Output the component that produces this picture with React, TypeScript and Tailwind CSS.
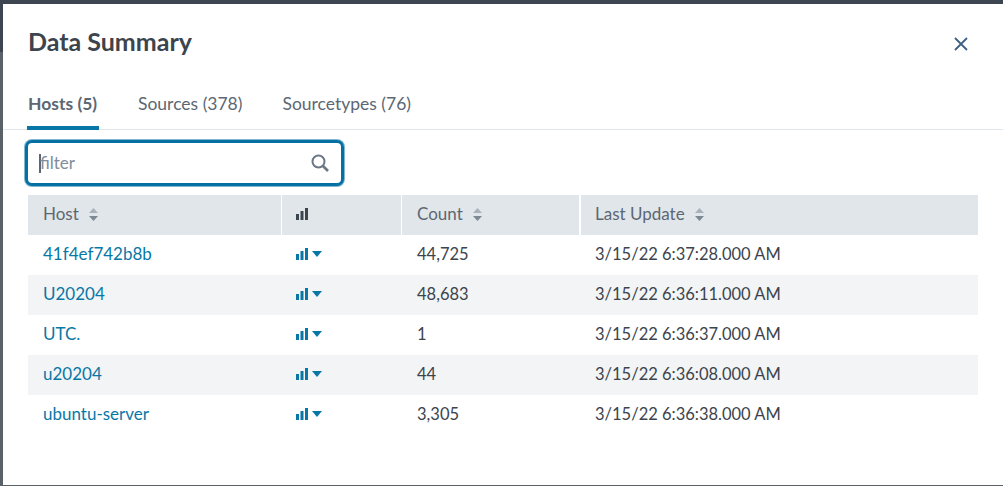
import React from "react";

const rows = [
  { host: "41f4ef742b8b", count: "44,725", last: "3/15/22 6:37:28.000 AM" },
  { host: "U20204", count: "48,683", last: "3/15/22 6:36:11.000 AM" },
  { host: "UTC.", count: "1", last: "3/15/22 6:36:37.000 AM" },
  { host: "u20204", count: "44", last: "3/15/22 6:36:08.000 AM" },
  { host: "ubuntu-server", count: "3,305", last: "3/15/22 6:36:38.000 AM" },
];

const Bars = ({ className }: { className: string }) => (
  <svg width="12" height="12" viewBox="0 0 12 12" className={className} fill="currentColor">
    <rect x="0" y="6" width="3" height="6" />
    <rect x="4.5" y="3" width="3" height="9" />
    <rect x="9" y="0" width="3" height="12" />
  </svg>
);

const Sort = () => (
  <svg width="9" height="13" viewBox="0 0 9 13">
    <path d="M4.5 0 9 5H0z" fill="#a9b2bb" />
    <path d="M4.5 13 0 8h9z" fill="#7d8894" />
  </svg>
);

export default function App() {
  return (
    <div className="w-[1003px] h-[486px] overflow-hidden bg-[linear-gradient(#3c4550_52px,#5a6169_52px)] pl-[3px] pt-1 pb-px font-['Lato',sans-serif]">
      <div className="h-full bg-white text-[#3c444d]">
        {/* Header */}
        <div className="flex items-center justify-between h-[76px] pl-[25px] pr-[35px]">
          <h1 className="mb-0.5 text-[25px] font-bold leading-none">Data Summary</h1>
          <svg width="14" height="14" viewBox="0 0 14 14" className="mt-[3px] text-[#3f6186]" stroke="currentColor" strokeWidth="1.8">
            <path d="M1 1l12 12M13 1 1 13" />
          </svg>
        </div>

        {/* Tabs */}
        <div className="flex h-[50px] pl-6 gap-[39px] border-b border-[#e1e6eb] text-[17.5px] text-[#5c6773]">
          <div className="h-[50px] w-[72px] border-b-4 border-[#0877a6] px-px pt-[11px] font-bold">Hosts (5)</div>
          <div className="mr-px pt-[11px]">Sources (378)</div>
          <div className="pt-[11px]">Sourcetypes (76)</div>
        </div>

        {/* Filter */}
        <div className="mt-[13px] ml-[25px] flex items-center justify-between w-[313px] h-10 rounded bg-white shadow-[0_0_0_3px_#0670a3,0_0_0_4px_#0670a380] pl-[11px] pr-3">
          <div className="flex items-center text-[17px] text-[#818d99]">
            <span className="w-0.5 h-[19px] bg-[#5c6773]" />
            <span className="-ml-px">filter</span>
          </div>
          <svg width="18" height="18" viewBox="0 0 18 18" className="text-[#6b7785]" fill="none" stroke="currentColor" strokeWidth="2">
            <circle cx="7.5" cy="7.5" r="6" />
            <path d="m12 12 5 5" strokeWidth="2.6" />
          </svg>
        </div>

        {/* Table */}
        <div className="mt-3 ml-[25px] w-[950px] text-[17px]">
          <div className="flex h-10 text-[#5c6773]">
            <div className="flex w-[253px] items-center gap-[10px] bg-[#e1e6eb] pb-0.5 pl-[15px]">Host <Sort /></div>
            <div className="ml-px flex w-[119px] items-center bg-[#e1e6eb] pb-0.5 pl-[14px]"><Bars className="text-[#3c444d]" /></div>
            <div className="ml-px flex w-[177px] items-center gap-[10px] bg-[#e1e6eb] pb-0.5 pl-[15px]">Count <Sort /></div>
            <div className="ml-0.5 flex flex-1 items-center gap-[10px] bg-[#e1e6eb] pb-0.5 pl-[14px]">Last Update <Sort /></div>
          </div>
          {rows.map((r, i) => (
            <div key={r.host} className={`flex h-10 items-center pb-0.5 ${i % 2 ? "bg-[#f2f4f5]" : "bg-white"}`}>
              <a className="w-[254px] pl-[15px] text-[#0877a6]">{r.host}</a>
              <div className="flex w-[120px] items-center gap-[4px] pl-[14px] text-[#0877a6]">
                <Bars className="" />
                <svg width="10" height="6" viewBox="0 0 10 6" fill="currentColor"><path d="M0 0h10L5 6z" /></svg>
              </div>
              <div className="w-[178px] pl-[15px] text-[16.5px]">{r.count}</div>
              <div className="pl-[15px] text-[16.5px]">{r.last}</div>
            </div>
          ))}
        </div>
      </div>
    </div>
  );
}
